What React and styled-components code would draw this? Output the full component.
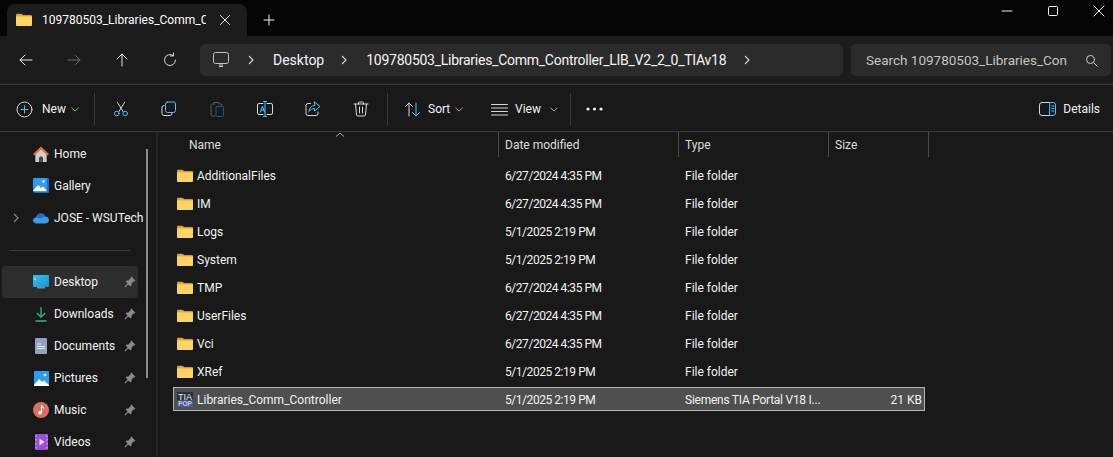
import React from 'react';
import styled, { createGlobalStyle } from 'styled-components';

const blue = '#4cc2ff';
const line = '#d6d6d6';

const GlobalStyle = createGlobalStyle`
  html, body {
    margin: 0;
    height: 100%;
    background: #191919;
    overflow: hidden;
  }
  * {
    box-sizing: border-box;
  }
`;

const Window = styled.div`
  width: 1113px;
  height: 457px;
  display: flex;
  flex-direction: column;
  overflow: hidden;
  background: #191919;
  color: #f2f2f2;
  font-family: Roboto, "Liberation Sans", sans-serif;
  font-size: 12px;
`;

const TitleBar = styled.div`
  height: 36px;
  flex: none;
  display: flex;
  align-items: flex-end;
  padding-left: 7px;
  background: #050505;
`;

const Tab = styled.div`
  width: 240px;
  height: 32px;
  display: flex;
  align-items: center;
  padding-left: 9px;
  border-radius: 8px 8px 0 0;
  background: #1c1c1c;
`;

const TabTitle = styled.span`
  width: 164px;
  margin-left: 10px;
  overflow: hidden;
  white-space: nowrap;
  font-size: 12px;
  color: #ffffff;
`;

const TabClose = styled.div`
  display: flex;
  margin-left: 13px;
`;

const NewTab = styled.div`
  display: flex;
  align-self: center;
  margin: 4px 0 0 16px;
`;

const WindowControls = styled.div`
  display: flex;
  align-self: flex-start;
  margin-left: auto;
  margin-right: -9px;
`;

const WindowButton = styled.div`
  width: 46px;
  height: 22px;
  display: flex;
  align-items: center;
  justify-content: center;
`;

const NavBar = styled.div`
  height: 49px;
  flex: none;
  display: flex;
  align-items: center;
  padding: 0 2px;
  background: #1c1c1c;
  border-bottom: 1px solid #3a3a3a;
`;

const NavButton = styled.div`
  width: 48px;
  display: flex;
  justify-content: center;
`;

const AddressBar = styled.div`
  width: 643px;
  height: 32px;
  margin-left: 6px;
  display: flex;
  align-items: center;
  padding-left: 13px;
  border-radius: 5px;
  background: #2b2b2b;
  font-size: 14px;
  color: #f4f4f4;
`;

const Crumb = styled.span`
  margin: ${(p) => p.$margin};
  letter-spacing: ${(p) => p.$tight ? '-0.26px' : 'normal'};
  white-space: nowrap;
`;

const SearchBox = styled.div`
  width: 260px;
  height: 32px;
  margin-left: 8px;
  display: flex;
  align-items: center;
  justify-content: space-between;
  padding: 0 13px 0 15px;
  border-radius: 5px;
  background: #2b2b2b;
  font-size: 13.5px;
  color: #c4c4c4;
  white-space: nowrap;
`;

const ToolBar = styled.div`
  height: 47px;
  flex: none;
  display: flex;
  align-items: center;
  padding: 2px 0 0 16px;
  background: #191919;
  border-bottom: 1px solid #3a3a3a;
`;

const ToolDivider = styled.div`
  width: 1px;
  height: 32px;
  margin: ${(p) => p.$margin || '0 2px'};
  background: #3a3a3a;
`;

const IconTool = styled.div`
  width: 48px;
  display: flex;
  justify-content: center;
`;

const LabelTool = styled.div`
  width: ${(p) => p.$width}px;
  display: flex;
  align-items: center;
  color: #f2f2f2;
`;

const ToolText = styled.span`
  margin: 0 ${(p) => p.$right || 6}px 0 ${(p) => p.$left || 8}px;
`;

const DetailsTool = styled.div`
  display: flex;
  align-items: center;
  gap: 7px;
  margin-left: auto;
  margin-right: 13px;
`;

const Main = styled.div`
  flex: 1;
  display: flex;
  min-height: 0;
`;

const Sidebar = styled.nav`
  position: relative;
  width: 158px;
  flex: none;
  padding: 6px 0 0 2px;
  border-right: 2px solid #262626;
`;

const ScrollThumb = styled.div`
  position: absolute;
  left: 146px;
  top: 17px;
  width: 2px;
  height: 229px;
  background: #8b8b8b;
`;

const NavRow = styled.div`
  width: 136px;
  height: 32px;
  display: flex;
  align-items: center;
  border-radius: 4px;
  background: ${(p) => (p.$active ? '#2d2d2d' : 'transparent')};
  white-space: nowrap;
`;

const Expander = styled.div`
  width: 31px;
  flex: none;
  display: flex;
  justify-content: center;
  padding-right: 3px;
`;

const NavIcon = styled.div`
  width: 16px;
  height: 16px;
  flex: none;
  display: flex;
  align-items: center;
  justify-content: center;
`;

const NavLabel = styled.span`
  margin-left: 5px;
  flex: 1;
`;

const PinSlot = styled.div`
  display: flex;
  margin-right: 2px;
`;

const NavSeparator = styled.div`
  width: 121px;
  height: 1px;
  margin: 16px 0 15px 7px;
  background: #3a3a3a;
`;

const Content = styled.section`
  position: relative;
  flex: 1;
  min-width: 0;
  padding-left: 15px;
`;

const SortCaret = styled.div`
  position: absolute;
  left: 177px;
  top: 0;
  display: flex;
`;

const cols = '326px 180px 150px 96px';

const HeaderRow = styled.div`
  display: grid;
  grid-template-columns: 326px 180px 150px 100px;
  height: 25px;
  margin-bottom: 6px;
`;

const HeaderCell = styled.div`
  display: flex;
  align-items: center;
  padding-left: ${(p) => p.$pad || 6}px;
  border-right: 1px solid #4a4a4a;
  color: #dedede;
`;

const FileList = styled.div`
  display: flex;
  flex-direction: column;
  gap: 4px;
`;

const FileRow = styled.div`
  width: 752px;
  height: 24px;
  display: grid;
  grid-template-columns: ${cols};
  align-items: center;
  background: ${(p) => (p.$selected ? '#4f4f4f' : 'transparent')};
  outline: ${(p) => (p.$selected ? '1px solid #b5b5b5' : 'none')};
  outline-offset: -1px;
`;

const NameCell = styled.div`
  display: flex;
  align-items: center;
  gap: 4px;
  padding: 1px 0 0 4px;
`;

const Cell = styled.div`
  padding: 1px 0 0 6px;
  white-space: nowrap;
  letter-spacing: ${(p) => p.$spacing || 0}px;
`;

const SizeCell = styled.div`
  padding: 1px 3px 0 0;
  text-align: right;
`;

const Stroke = ({ size = 16, children, ...rest }) => (
  <svg width={size} height={size} viewBox="0 0 16 16" fill="none" stroke={line} strokeWidth="1" strokeLinecap="round" strokeLinejoin="round" {...rest}>
    {children}
  </svg>
);

const Folder = ({ width = 16, height = 14 }) => (
  <svg width={width} height={height} viewBox="0 0 16 14">
    <path d="M0 2.2C0 1.3.6.8 1.4.8h3.7c.5 0 .8.2 1.1.5L7.5 2.6H0z" fill="#e0a52c" />
    <path d="M0 3.5c0-.6.5-1 1-1h13.8c.7 0 1.2.5 1.2 1.1v8.3c0 .7-.5 1.1-1.2 1.1H1.2C.5 13 0 12.6 0 11.9z" fill="#fcd462" />
    <path d="M0 3.4c0-.5.5-.9 1-.9h13.8c.7 0 1.2.5 1.2 1.1v.3H0z" fill="#f3bf45" />
  </svg>
);

const Chevron = ({ color = '#d8d8d8' }) => (
  <svg width="8" height="10" viewBox="0 0 8 10" fill="none" stroke={color} strokeWidth="1.1">
    <path d="M2 1l4 4-4 4" />
  </svg>
);

const Caret = () => (
  <svg width="8" height="5" viewBox="0 0 8 5" fill="none" stroke="#a8a8a8" strokeWidth="1">
    <path d="M.5.8L4 4l3.5-3.2" />
  </svg>
);

const Pin = () => (
  <svg width="12" height="12" viewBox="0 0 12 12" fill="#8a8a8a">
    <path d="M7.3.6l4.1 4.1-.9.8-.7-.2-2.2 2.2-.2 2-1 .9-2-2L1.2 11.6l-.8-.8 3.2-3.2-2-2 .9-1 2-.2L6.7 2.2l-.2-.7z" />
  </svg>
);

const HomeIcon = () => (
  <svg width="17" height="17" viewBox="0 0 17 17">
    <path d="M2.500 8l6-5.500 6 5.500v8.500h-12z" fill="#cfcfcf" />
    <path d="M6.300 16.500v-4c0-1.200 1-1.800 2.200-1.800s2.200.6 2.200 1.800v4z" fill="#4a4a4a" />
    <path d="M.8 8.800L8.500 1.500l7.700 7.300" fill="none" stroke="#e0762a" strokeWidth="2.200" />
  </svg>
);

const GalleryIcon = () => (
  <svg width="16" height="16" viewBox="0 0 16 16">
    <rect x="1" y="0" width="15" height="15" rx="1" fill="#1a6fc0" />
    <rect x="0" y="0" width="14" height="14" rx="1" fill="#2f9cf0" />
    <path d="M0 13l5-6 3 3 2-1.500 4 4.500H0z" fill="#fff" />
    <circle cx="10.500" cy="3.500" r="1.300" fill="#fff" />
  </svg>
);

const CloudIcon = () => (
  <svg width="16" height="11" viewBox="0 0 16 11">
    <path d="M3.500 10.500C1.500 10.500 0 9.300 0 7.600s1.300-3 3-3c.7-2.600 2.700-4 4.800-4 2 0 3.700 1.200 4.300 3 2.200 0 3.900 1.700 3.900 3.500s-1.500 3.400-3.500 3.400z" fill="#3a9be8" />
    <path d="M3 4.600C3.700 2 5.700.6 7.800.6c2 0 3.700 1.200 4.300 3L8 5.500z" fill="#1872c8" />
  </svg>
);

const DesktopIcon = () => (
  <svg width="16" height="14" viewBox="0 0 16 14">
    <defs>
      <linearGradient id="desk" x1="0" y1="0" x2="1" y2="1">
        <stop offset="0" stopColor="#35c6e8" />
        <stop offset="1" stopColor="#1f8fd0" />
      </linearGradient>
    </defs>
    <rect x="0" y="0" width="16" height="12" rx="1" fill="url(#desk)" />
    <rect x="4" y="12" width="8" height="1.500" fill="#7d8a94" />
    <rect x="1.500" y="3" width="1" height="2" fill="#d8f4fb" />
  </svg>
);

const DownloadIcon = () => (
  <svg width="14" height="16" viewBox="0 0 14 16" fill="none" stroke="#2fb58c" strokeWidth="1.300">
    <path d="M7 1v10M2.800 7L7 11.200 11.200 7M1.500 15h11" />
  </svg>
);

const DocumentsIcon = () => (
  <svg width="12" height="16" viewBox="0 0 12 16">
    <rect width="12" height="16" rx="1" fill="#8fa4bc" />
    <path d="M2 6h4M2 8.500h8M2 10.500h8" stroke="#e4e9ef" strokeWidth="1" />
  </svg>
);

const PicturesIcon = () => (
  <svg width="15" height="15" viewBox="0 0 15 15">
    <rect width="15" height="15" rx="1" fill="#2a9cf2" />
    <path d="M0 14l5-6 3 3 2-1.500 5 4.500v1H0z" fill="#fff" />
    <circle cx="11" cy="4" r="1.300" fill="#fff" />
  </svg>
);

const MusicIcon = () => (
  <svg width="16" height="16" viewBox="0 0 16 16">
    <circle cx="8" cy="8" r="8" fill="#d9705f" />
    <path d="M8.500 3.500v6.800" stroke="#fff" strokeWidth="1.100" fill="none" />
    <path d="M8.500 3.500c.3 1.500 2 1.800 2.300 3" stroke="#fff" strokeWidth="1.100" fill="none" />
    <circle cx="7" cy="10.700" r="1.700" fill="#fff" />
  </svg>
);

const VideosIcon = () => (
  <svg width="13" height="16" viewBox="0 0 13 16">
    <rect width="13" height="16" rx="1" fill="#9a4fd8" />
    <path d="M1 1.500v1.500M1 5v1.500M1 9v1.500M1 13v1.500M12 1.500v1.500M12 5v1.500M12 9v1.500M12 13v1.500" stroke="#d9b8f5" strokeWidth="1" />
    <path d="M4.500 4.500l5 3.500-5 3.500z" fill="#f2e6fc" />
  </svg>
);

const TiaIcon = () => (
  <svg width="16" height="15" viewBox="0 0 16 15">
    <rect width="16" height="8.500" fill="#2c3040" />
    <rect y="8.500" width="16" height="6.500" fill="#4d5a8c" />
    <text x="8" y="8" textAnchor="middle" fontFamily="Liberation Sans" fontSize="9" fill="#e8e8ee">TIA</text>
    <text x="8" y="14.300" textAnchor="middle" fontFamily="Liberation Sans" fontSize="6.500" fontWeight="700" fill="#c4cbe8">POP</text>
  </svg>
);

const navItems = [
  { label: 'Home', icon: <HomeIcon /> },
  { label: 'Gallery', icon: <GalleryIcon /> },
  { label: 'JOSE - WSUTech', icon: <CloudIcon />, expand: true },
  { separator: true },
  { label: 'Desktop', icon: <DesktopIcon />, pin: true, active: true },
  { label: 'Downloads', icon: <DownloadIcon />, pin: true },
  { label: 'Documents', icon: <DocumentsIcon />, pin: true },
  { label: 'Pictures', icon: <PicturesIcon />, pin: true },
  { label: 'Music', icon: <MusicIcon />, pin: true },
  { label: 'Videos', icon: <VideosIcon />, pin: true },
];

const files = [
  ['AdditionalFiles', '6/27/2024 4:35 PM'],
  ['IM', '6/27/2024 4:35 PM'],
  ['Logs', '5/1/2025 2:19 PM'],
  ['System', '5/1/2025 2:19 PM'],
  ['TMP', '6/27/2024 4:35 PM'],
  ['UserFiles', '6/27/2024 4:35 PM'],
  ['Vci', '6/27/2024 4:35 PM'],
  ['XRef', '5/1/2025 2:19 PM'],
];

export default function App() {
  return (
    <Window>
      <GlobalStyle />
      <TitleBar>
        <Tab>
          <Folder />
          <TabTitle>109780503_Libraries_Comm_Controller_LIB_V2_2_0_TIAv18</TabTitle>
          <TabClose>
            <Stroke size={12} viewBox="0 0 12 12" stroke="#e8e8e8"><path d="M1.500 1.500l9 9M10.500 1.500l-9 9" /></Stroke>
          </TabClose>
        </Tab>
        <NewTab>
          <Stroke size={12} viewBox="0 0 12 12" stroke="#efefef"><path d="M6 1v10M1 6h10" /></Stroke>
        </NewTab>
        <WindowControls>
          <WindowButton>
            <Stroke size={12} viewBox="0 0 12 12" stroke="#f2f2f2"><path d="M1 6h10" /></Stroke>
          </WindowButton>
          <WindowButton>
            <Stroke size={12} viewBox="0 0 12 12" stroke="#f2f2f2"><rect x="1.500" y="1.500" width="9" height="9" rx="1" /></Stroke>
          </WindowButton>
          <WindowButton>
            <Stroke size={12} viewBox="0 0 12 12" stroke="#f2f2f2"><path d="M1 1l10 10M11 1L1 11" /></Stroke>
          </WindowButton>
        </WindowControls>
      </TitleBar>

      <NavBar>
        <NavButton>
          <Stroke stroke="#e8e8e8"><path d="M14 8H2M7 3L2 8l5 5" /></Stroke>
        </NavButton>
        <NavButton>
          <Stroke stroke="#6a6a6a"><path d="M2 8h12M9 3l5 5-5 5" /></Stroke>
        </NavButton>
        <NavButton>
          <Stroke stroke="#e8e8e8"><path d="M8 14V2M3 7l5-5 5 5" /></Stroke>
        </NavButton>
        <NavButton>
          <Stroke stroke="#d8d8d8"><path d="M13.500 8A5.500 5.500 0 1 1 11 3.400M11.500 1v3h-3" /></Stroke>
        </NavButton>
        <AddressBar>
          <svg width="16" height="16" viewBox="0 0 16 16" fill="none" stroke="#c4c4c4" strokeWidth="1">
            <rect x=".5" y=".5" width="15" height="11" rx="2" />
            <path d="M6 14.500h4M7 12v2M9 12v2" />
          </svg>
          <Crumb $margin="0 18px 0 18px"><Chevron /></Crumb>
          <Crumb $margin="0 16px 0 0">Desktop</Crumb>
          <Crumb $margin="0 18px 0 0"><Chevron /></Crumb>
          <Crumb $tight $margin="0 17px 0 0">109780503_Libraries_Comm_Controller_LIB_V2_2_0_TIAv18</Crumb>
          <Crumb $margin="0"><Chevron /></Crumb>
        </AddressBar>
        <SearchBox>
          <span>Search 109780503_Libraries_Con</span>
          <Stroke size={13} viewBox="0 0 13 13" stroke="#d0d0d0"><circle cx="5.500" cy="5.500" r="4" /><path d="M8.500 8.500l3.800 3.800" /></Stroke>
        </SearchBox>
      </NavBar>

      <ToolBar>
        <LabelTool $width={78}>
          <Stroke size={17} viewBox="0 0 17 17">
            <circle cx="8.500" cy="8.500" r="7.500" />
            <path d="M8.500 5v7M5 8.500h7" stroke={blue} />
          </Stroke>
          <ToolText $left={9} $right={5}>New</ToolText>
          <Caret />
        </LabelTool>
        <ToolDivider $margin="0 2px 0 0" />
        <IconTool>
          <Stroke size={16}>
            <path d="M4.500 1.500l5.500 9M11.500 1.500l-5.500 9" />
            <circle cx="3.800" cy="12.500" r="2.300" stroke={blue} />
            <circle cx="12.200" cy="12.500" r="2.300" stroke={blue} />
          </Stroke>
        </IconTool>
        <IconTool>
          <Stroke size={16}>
            <path d="M3 4.500a2 2 0 0 0-2 2v6a2 2 0 0 0 2 2h6a2 2 0 0 0 2-2" />
            <rect x="4.500" y="1" width="10" height="10.500" rx="2" stroke={blue} />
          </Stroke>
        </IconTool>
        <IconTool>
          <Stroke size={16} stroke="#5c5c5c">
            <path d="M5 3H3.500a1.500 1.500 0 0 0-1.500 1.500v9A1.500 1.500 0 0 0 3.500 15H6M5 3V1.500h5V3M11 3h.5A1.500 1.500 0 0 1 13 4.500" />
            <rect x="7" y="5.500" width="7.500" height="10" rx="1" stroke="#1f5a78" />
          </Stroke>
        </IconTool>
        <IconTool>
          <Stroke size={16} viewBox="0 0 16 16">
            <path d="M6 2.500H2A1.500 1.500 0 0 0 .5 4v8A1.500 1.500 0 0 0 2 13.500h4M10 2.500h4A1.500 1.500 0 0 1 15.500 4v8a1.500 1.500 0 0 1-1.500 1.500h-4" />
            <path d="M8 .5v15M6.500.5h3M6.500 15.500h3M3.500 11l2-6 2 6M4.200 9h2.600" stroke={blue} />
          </Stroke>
        </IconTool>
        <IconTool>
          <Stroke size={16}>
            <path d="M5.500 2.500H3A2 2 0 0 0 1 4.500v8a2 2 0 0 0 2 2h8a2 2 0 0 0 2-2V11" />
            <path d="M9.500 1l5.500 4.500L9.500 10V7.500C7 7.500 5.500 8.500 4 10.500c.3-3.500 2.500-6 5.500-6z" stroke={blue} />
          </Stroke>
        </IconTool>
        <IconTool>
          <Stroke size={16}>
            <path d="M1 3h14M5.500 3V2a1 1 0 0 1 1-1h3a1 1 0 0 1 1 1v1M2.500 3l1 11a1.500 1.500 0 0 0 1.500 1h6a1.500 1.500 0 0 0 1.500-1l1-11M6.500 6v6M9.500 6v6" />
          </Stroke>
        </IconTool>
        <ToolDivider $margin="0 16px 0 2px" />
        <LabelTool $width={87}>
          <Stroke size={17} viewBox="0 0 17 17">
            <path d="M5 15V2M1.500 5.500L5 2l3.500 3.500" />
            <path d="M12 2v13M8.500 11.500L12 15l3.500-3.500" stroke={blue} />
          </Stroke>
          <ToolText $left={7} $right={5}>Sort</ToolText>
          <Caret />
        </LabelTool>
        <LabelTool $width={79}>
          <Stroke size={17} viewBox="0 0 17 17">
            <path d="M.5 3.500h16M.5 7h16M.5 10.500h16M.5 14h16" />
          </Stroke>
          <ToolText $left={7} $right={9}>View</ToolText>
          <Caret />
        </LabelTool>
        <ToolDivider $margin="0 15px 0 0" />
        <svg width="17" height="4" viewBox="0 0 17 4" fill="#efefef">
          <circle cx="2" cy="2" r="1.600" />
          <circle cx="8.500" cy="2" r="1.600" />
          <circle cx="15" cy="2" r="1.600" />
        </svg>
        <DetailsTool>
          <Stroke size={17} viewBox="0 0 17 14" height={14}>
            <path d="M11 .5H3A2.500 2.500 0 0 0 .5 3v8A2.500 2.500 0 0 0 3 13.500h8" />
            <path d="M11 .5h3A2.500 2.500 0 0 1 16.500 3v8a2.500 2.500 0 0 1-2.500 2.500h-3zM12.800 4h2M12.800 6.500h2M12.800 9h2" stroke={blue} />
          </Stroke>
          <span>Details</span>
        </DetailsTool>
      </ToolBar>

      <Main>
        <Sidebar>
          <ScrollThumb />
          {navItems.map((item, i) =>
            item.separator ? (
              <NavSeparator key={i} />
            ) : (
              <NavRow key={item.label} $active={item.active}>
                <Expander>{item.expand && <Chevron color="#8a8a8a" />}</Expander>
                <NavIcon>{item.icon}</NavIcon>
                <NavLabel>{item.label}</NavLabel>
                {item.pin && <PinSlot><Pin /></PinSlot>}
              </NavRow>
            )
          )}
        </Sidebar>
        <Content>
          <SortCaret>
            <svg width="10" height="5" viewBox="0 0 10 5" fill="none" stroke="#a8a8a8" strokeWidth="1">
              <path d="M1 4.500L5 1l4 3.500" />
            </svg>
          </SortCaret>
          <HeaderRow>
            <HeaderCell $pad={16}>Name</HeaderCell>
            <HeaderCell>Date modified</HeaderCell>
            <HeaderCell>Type</HeaderCell>
            <HeaderCell>Size</HeaderCell>
          </HeaderRow>
          <FileList>
            {files.map(([name, date]) => (
              <FileRow key={name}>
                <NameCell><Folder />{name}</NameCell>
                <Cell $spacing={-0.45}>{date}</Cell>
                <Cell>File folder</Cell>
              </FileRow>
            ))}
            <FileRow $selected>
              <NameCell><TiaIcon />Libraries_Comm_Controller</NameCell>
              <Cell $spacing={-0.45}>5/1/2025 2:19 PM</Cell>
              <Cell $spacing={-0.25}>Siemens TIA Portal V18 I...</Cell>
              <SizeCell>21 KB</SizeCell>
            </FileRow>
          </FileList>
        </Content>
      </Main>
    </Window>
  );
}
